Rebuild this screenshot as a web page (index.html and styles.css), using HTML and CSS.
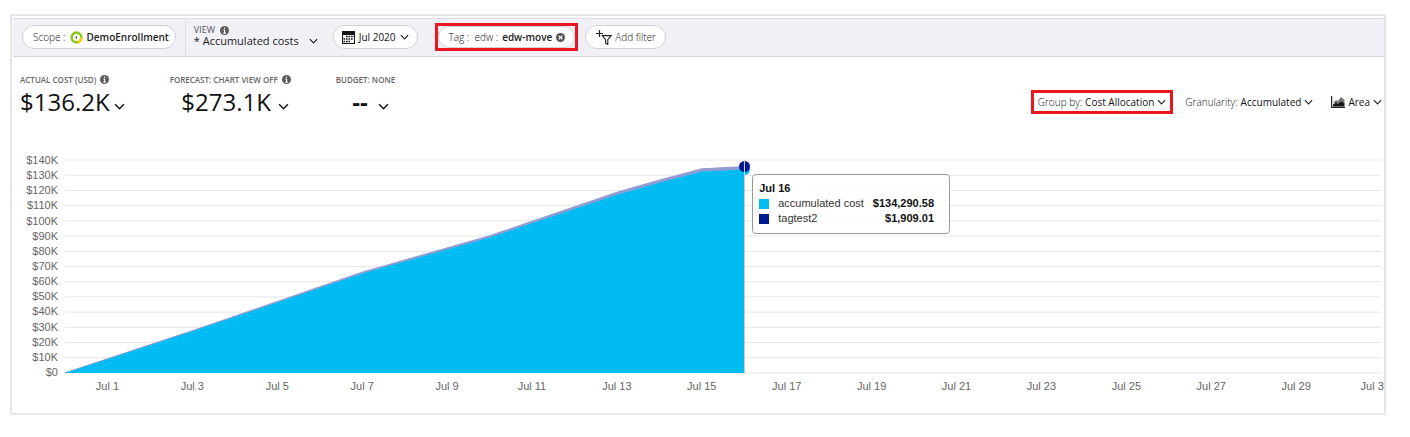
FILE: index.html
```html
<!DOCTYPE html>
<html lang="en">
<head>
<meta charset="utf-8">
<title>Cost analysis</title>
<link rel="stylesheet" href="styles.css">
</head>
<body>
<svg class="defs" aria-hidden="true">
  <symbol id="chevron" viewBox="0 0 10 6"><path d="M1 1l4 4 4-4" fill="none" stroke="currentColor" stroke-width="1.3"/></symbol>
  <symbol id="info" viewBox="0 0 10 10"><circle cx="5" cy="5" r="5" fill="#5c5c5c"/><path d="M5 1.6v1.5M3.8 4.4h1.3v3.2M3.7 7.9h2.8" stroke="#fff" stroke-width="1.2" fill="none"/></symbol>
</svg>
<main class="frame">
  <header class="toolbar">
    <div class="scope">
      <button class="pill pill-scope"><span class="light">Scope :</span>
        <svg class="icon-scope" viewBox="0 0 14 14" aria-hidden="true"><circle cx="7" cy="7" r="5.2" fill="#fff" stroke="#8cc81e" stroke-width="2.8"/><path d="M12.2 7A5.2 5.2 0 0 1 8.5 12" fill="none" stroke="#fcd116" stroke-width="2.8"/><path d="M7 5.4v3.2M5.8 7h2" stroke="#59666e" stroke-width="1"/></svg>
        <span class="strong">DemoEnrollment</span></button>
    </div>
    <button class="view">
      <span class="view-label">VIEW <svg class="icon-info" aria-hidden="true"><use href="#info"/></svg></span>
      <span class="view-name">* Accumulated costs <svg class="chevron" aria-hidden="true"><use href="#chevron"/></svg></span>
    </button>
    <button class="pill pill-date">
      <svg class="icon-calendar" viewBox="0 0 13 13" aria-hidden="true"><path d="M0 0h13v13H0z" fill="#161616"/><path d="M1 4h11v8H1z" fill="#fff"/><path d="M4 5.5h8M1.500 8h10M1.500 10.500h7" stroke="#161616" stroke-width="1.600" stroke-dasharray="1.700 .8"/></svg>
      <span class="medium">Jul 2020</span> <svg class="chevron" aria-hidden="true"><use href="#chevron"/></svg></button>
    <div class="callout callout-tag">
      <button class="pill pill-tag"><span class="light">Tag : &nbsp;edw :</span> <span class="strong">edw-move</span>
        <svg class="icon-info" viewBox="0 0 10 10" aria-hidden="true"><circle cx="5" cy="5" r="5" fill="#555"/><path d="M3 3l4 4M7 3L3 7" stroke="#fff" stroke-width="1.4"/></svg></button>
    </div>
    <button class="pill pill-add">
      <svg class="icon-filter" viewBox="0 0 16 15" aria-hidden="true"><path d="M3.5 0v7M0 3.5h7" stroke="#222" stroke-width="1.2"/><path d="M6.3 5.6h8.900l-3.400 4v4.800l-2.200-1.200V9.600z" fill="none" stroke="#222" stroke-width="1.1"/></svg>
      <span class="light">Add filter</span></button>
  </header>

  <section class="summary">
    <div class="kpis">
      <button class="kpi"><span class="kpi-label">ACTUAL COST (USD) <svg class="icon-info" aria-hidden="true"><use href="#info"/></svg></span>
        <span class="kpi-value">$136.2K <svg class="chevron chevron-kpi" aria-hidden="true"><use href="#chevron"/></svg></span></button>
      <button class="kpi kpi-center"><span class="kpi-label">FORECAST: CHART VIEW OFF <svg class="icon-info" aria-hidden="true"><use href="#info"/></svg></span>
        <span class="kpi-value">$273.1K <svg class="chevron chevron-kpi" aria-hidden="true"><use href="#chevron"/></svg></span></button>
      <button class="kpi kpi-center"><span class="kpi-label">BUDGET: NONE</span>
        <span class="kpi-value kpi-none">-- <svg class="chevron chevron-kpi" aria-hidden="true"><use href="#chevron"/></svg></span></button>
    </div>
    <div class="options">
      <div class="callout"><button class="option"><span class="light">Group by:</span> <span class="medium">Cost Allocation</span> <svg class="chevron" aria-hidden="true"><use href="#chevron"/></svg></button></div>
      <button class="option"><span class="light">Granularity:</span> <span class="medium">Accumulated</span> <svg class="chevron" aria-hidden="true"><use href="#chevron"/></svg></button>
      <button class="option option-area"><svg class="icon-area" viewBox="0 0 14 12" aria-hidden="true"><path d="M.6 0v11.400H14" fill="none" stroke="#222" stroke-width="1.2"/><path d="M2 7l3-3 2 1 3-4 3.500 3v3l-3-1-3 2-3-1z" fill="#777"/><path d="M2 10.500V8.500l3-2 2 1.500 3-2.500 3.500 1.500v3.500z" fill="#161616"/></svg>
        <span class="medium">Area</span> <svg class="chevron" aria-hidden="true"><use href="#chevron"/></svg></button>
    </div>
  </section>

  <section class="chart">
    <div class="y-axis">
      <span>$140K</span><span>$130K</span><span>$120K</span><span>$110K</span><span>$100K</span><span>$90K</span><span>$80K</span><span>$70K</span><span>$60K</span><span>$50K</span><span>$40K</span><span>$30K</span><span>$20K</span><span>$10K</span><span>$0</span>
    </div>
    <div class="plot">
      <svg class="series" viewBox="0 0 31 140" preserveAspectRatio="none" role="img" aria-label="Accumulated cost by day">
        <path class="grid" d="M0 0H31M0 10H31M0 20H31M0 30H31M0 40H31M0 50H31M0 60H31M0 70H31M0 80H31M0 90H31M0 100H31M0 110H31M0 120H31M0 130H31M0 140H31"/>
        <path class="tag-area" d="M0 140L1 130.700L3 112.200L5 93L7 73.700L10 49.800L13 21.200L14 13.200L15 5.800L16 4.300V6.200L15 7.500L14 15L13 22.800L10 51L7 74.600L5 93.700L3 112.600L1 130.900Z"/>
        <path class="cost-area" d="M0 140L1 130.900L3 112.600L5 93.700L7 74.600L10 51L13 22.800L14 15L15 7.500L16 6.200V140Z"/>
      </svg>
      <i class="dot dot-cost"></i><i class="dot dot-tag"></i><i class="crosshair"></i>
      <div class="tooltip">
        <strong class="tip-title">Jul 16</strong>
        <i class="swatch swatch-cost"></i><span>accumulated cost</span><strong>$134,290.58</strong>
        <i class="swatch swatch-tag"></i><span>tagtest2</span><strong>$1,909.01</strong>
      </div>
    </div>
    <div class="x-axis">
      <span>Jul 1</span><span>Jul 3</span><span>Jul 5</span><span>Jul 7</span><span>Jul 9</span><span>Jul 11</span><span>Jul 13</span><span>Jul 15</span><span>Jul 17</span><span>Jul 19</span><span>Jul 21</span><span>Jul 23</span><span>Jul 25</span><span>Jul 27</span><span>Jul 29</span><span class="last">Jul 31</span>
    </div>
  </section>
</main>
</body>
</html>
```
FILE: styles.css
```css
* { box-sizing: border-box; }
body { margin: 0; padding: 14px 24px 22px 10px; background: #fff; color: #222; font-family: "Open Sans", "Noto Sans", sans-serif; font-size: 10px; line-height: 14px; }
button { margin: 0; padding: 0; border: 0; background: none; color: inherit; font: inherit; text-align: left; white-space: nowrap; cursor: pointer; }
.defs { position: absolute; width: 0; height: 0; }
.frame { border: 2px solid #e6e6e6; padding: 2px 0 20px 1px; overflow: hidden; }

.light { color: #111; font-weight: 300; }
.medium { font-weight: 500; color: #111; }
.strong { font-weight: 600; color: #222; }
.chevron { width: 9px; height: 6px; flex: none; }
.icon-info { width: 9px; height: 9px; flex: none; }

.toolbar { display: flex; align-items: center; height: 39px; padding: 0 0 1px 9px; background: #f0f0f6; border-top: 1px solid #dcdce2; border-bottom: 1px solid #d4d4da; }
.scope { display: flex; align-items: center; align-self: stretch; padding-right: 9px; border-right: 1px solid #dedee4; }
.pill { display: flex; align-items: center; gap: 4px; height: 24px; padding: 0 10px; border: 1px solid #d2d2d6; border-radius: 12px; background: #fff; }
.pill-scope { padding: 0 6px 0 10px; }
.icon-scope { width: 13px; height: 13px; }
.view { display: flex; flex-direction: column; padding: 0 0 2px 8px; margin-right: 15px; }
.view-label { display: flex; align-items: center; gap: 5px; font-size: 9px; line-height: 10px; color: #555; }
.view-name { display: flex; align-items: center; gap: 10px; font-size: 11px; line-height: 12px; font-weight: 500; }
.icon-calendar { width: 13px; height: 13px; }
.pill-date { padding: 0 8px; }
.callout { border: 3px solid #ec1620; }
.callout-tag { margin: 0 7px 0 17px; }
.pill-tag { height: 22px; padding: 0 9px 0 10px; }
.icon-filter { width: 16px; height: 15px; }
.pill-add { gap: 3px; padding: 0 9px 0 10px; }

.summary { display: flex; justify-content: space-between; padding: 15px 2px 0 7px; }
.kpis { display: flex; gap: 45px; }
.kpi { display: flex; flex-direction: column; }
.kpi-center { align-items: center; }
.kpi-label { display: flex; align-items: center; gap: 4px; height: 15px; font-size: 8px; font-weight: 600; color: #666; }
.kpi-value { display: flex; align-items: center; gap: 4px; font-size: 24px; line-height: 30px; font-weight: 500; color: #111; }
.kpi-center .kpi-value { gap: 7px; padding-left: 10px; }
.kpi-center .kpi-none { gap: 10px; font-weight: 700; }
.chevron-kpi { width: 11px; height: 7px; margin-top: 8px; }
.options { display: flex; align-items: center; gap: 12px; margin-top: 16px; height: 27px; }
.option { display: flex; align-items: center; gap: 3px; padding: 2px 4px; }
.options > .option { padding: 2px 0; }
.option-area { margin-left: 6px; }
.icon-area { width: 14px; height: 12px; }

.chart { display: grid; grid-template-columns: 52px 1fr; padding: 36px 3px 0 0; color: #666; font-family: "Liberation Sans", Arial, sans-serif; font-size: 11px; }
.y-axis { display: flex; flex-direction: column; justify-content: space-between; height: 227px; padding-right: 7px; text-align: right; line-height: 15px; }
.plot { position: relative; margin: 7px 0 6px; }
.series { display: block; width: 100%; height: 213px; overflow: visible; }
.series .grid { fill: none; stroke: #e6e6e6; stroke-width: 1px; vector-effect: non-scaling-stroke; }
.cost-area { fill: #00bcf2; }
.tag-area { fill: #949bd2; stroke: #949bd2; stroke-width: 1px; vector-effect: non-scaling-stroke; }
.dot { position: absolute; left: calc(100% * 16 / 31); width: 11px; height: 11px; margin: -5px 0 0 -5px; border-radius: 50%; }
.dot-cost { top: 9px; background: #00bcf2; }
.dot-tag { top: 6px; background: #00188f; }
.crosshair { position: absolute; left: calc(100% * 16 / 31); top: 0; bottom: 0; width: 1px; background: #ccc; }
.tooltip { position: absolute; left: calc(100% * 16 / 31 + 8px); top: 14px; display: grid; grid-template-columns: 10px auto auto; column-gap: 9px; align-items: center; padding: 6px 15px 7px 6px; border: 1px solid #999; border-radius: 4px; background: rgba(255, 255, 255, .88); color: #333; line-height: 15px; white-space: nowrap; }
.tooltip strong { color: #111; text-align: right; }
.tooltip .tip-title { grid-column: 1 / -1; text-align: left; }
.swatch { width: 10px; height: 10px; }
.swatch-cost { background: #00bcf2; }
.swatch-tag { background: #00188f; }
.x-axis { grid-column: 2; display: flex; line-height: 13px; text-align: center; white-space: nowrap; }
.x-axis span { flex: 2 1 0; min-width: 0; }
.x-axis .last { flex: 1 1 0; text-indent: 22px; text-align: left; }
```
